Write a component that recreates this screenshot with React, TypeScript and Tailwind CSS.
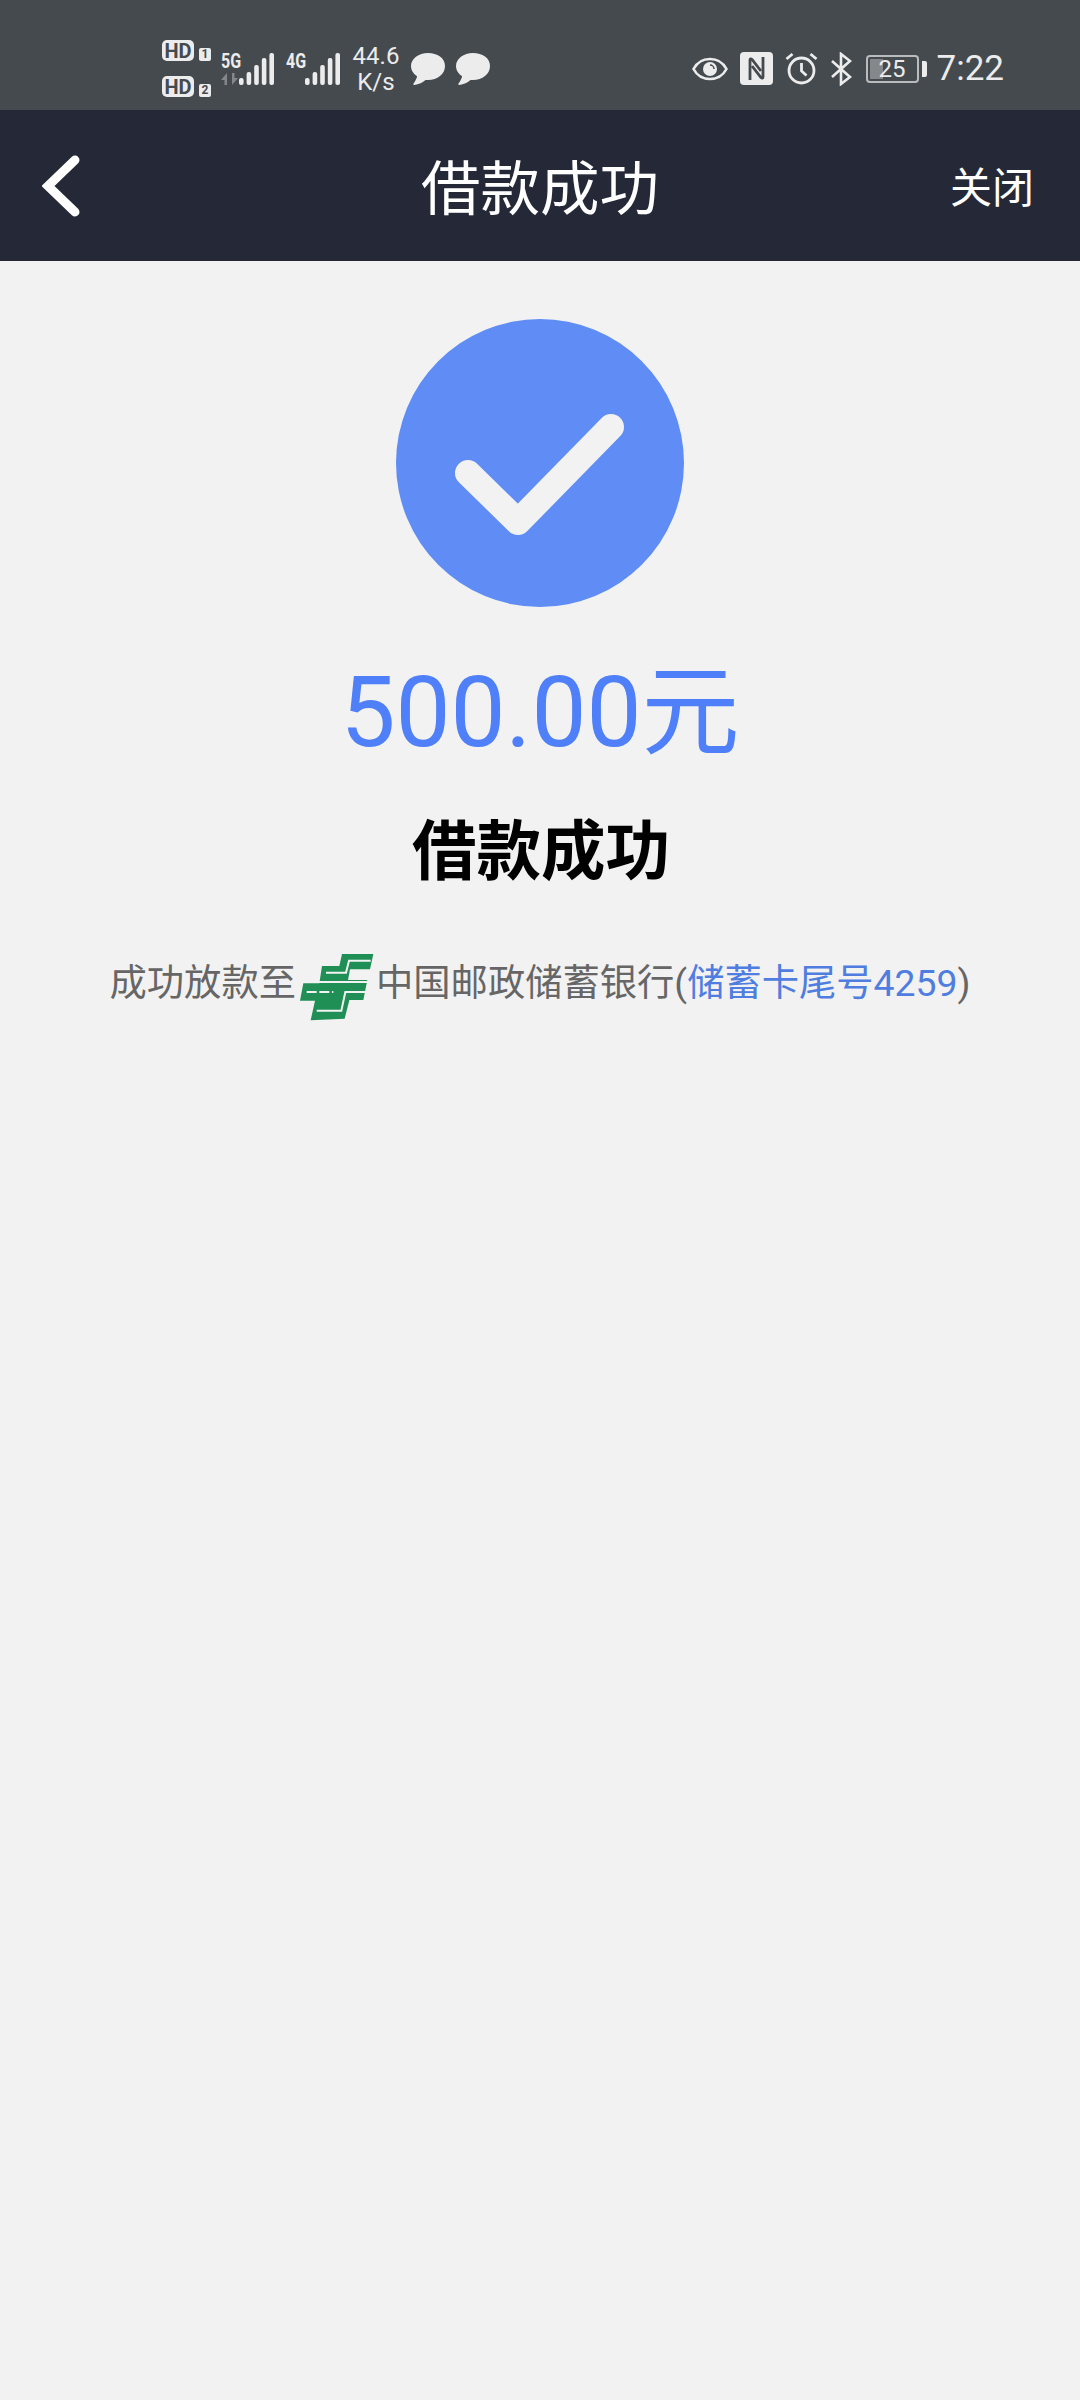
const FONT = "font-['Roboto','Noto_Sans_CJK_SC',sans-serif]";

function SimBadge({ n }: { n: string }) {
  return (
    <div className="flex items-center gap-[5px]">
      <span className="flex h-[21px] w-[32px] items-center justify-center rounded-[5px] bg-[#ececec] text-[20px] font-bold leading-none text-[#454a4f]">
        HD
      </span>
      <span className="mt-[7px] flex h-[13px] w-[12px] items-center justify-center rounded-[2px] bg-[#ececec] text-[12px] font-bold leading-none text-[#454a4f]">
        {n}
      </span>
    </div>
  );
}

function NetLabel({ text }: { text: string }) {
  return (
    <span className="block w-[19px] origin-left scale-x-[0.8] text-[20px] font-bold leading-[17px]">{text}</span>
  );
}

function SignalBars() {
  const heights = [7, 13, 20, 27, 32];
  return (
    <svg width="36" height="32" viewBox="0 0 36 32" className="shrink-0">
      {heights.map((h, i) => (
        <rect key={i} x={i * 7.6} y={32 - h} width="4.6" height={h} rx="2" fill="#ececec" />
      ))}
    </svg>
  );
}

function Bubble() {
  return (
    <svg width="34" height="32" viewBox="0 0 34 32" className="shrink-0">
      <path
        d="M17 0C7.6 0 0 5.700 0 13c0 4.100 2.400 7.800 6.100 10.200-.5 2.600-2 5.200-3.600 7.300-.5.600 0 1.500.8 1.400 4.600-.6 8.500-2.300 11.200-5 .8.100 1.600.100 2.500.100 9.400 0 17-5.800 17-14S26.400 0 17 0z"
        fill="#ececec"
      />
    </svg>
  );
}

function PostLogo() {
  return (
    <svg width="74" height="68" viewBox="60 70 222 202" className="ml-[4px] mr-[2px] mt-[9px] shrink-0">
      <path
        d="M186 72H280L270 118H210L204 150H262L250 210H208L194 266L92 271L105 212H60L70 160H118L126 108H178Z"
        fill="#1f8f55"
      />
      <g fill="none" stroke="#f2f2f2" strokeWidth="6">
        <path d="M272 92H207L198 128H138" />
        <path d="M116 156H264" />
        <path d="M80 186H160" strokeDasharray="30 8" />
        <path d="M256 186H196L184 242H110" />
      </g>
    </svg>
  );
}

export default function App() {
  return (
    <div className={`flex h-[2400px] w-[1080px] flex-col bg-[#f2f2f2] ${FONT}`}>
      {/* status bar */}
      <div className="flex h-[110px] items-center justify-between bg-[#454a4f] pl-[162px] pr-[76px] pt-[27px] text-[#ececec]">
        <div className="flex items-center">
          <div className="flex flex-col gap-[15px]">
            <SimBadge n="1" />
            <SimBadge n="2" />
          </div>
          <div className="ml-[10px] flex w-[19px] flex-col items-start">
            <NetLabel text="5G" />
            <svg width="18" height="12" viewBox="0 0 18 12" className="mt-[3px]" fill="#85888b">
              <path d="M0 7L6 0V12H3.500V7zM17 5L11 12V0H13.500V5z" />
            </svg>
          </div>
          <div className="ml-[-1px]">
            <SignalBars />
          </div>
          <div className="ml-[11px] flex w-[19px] flex-col items-start">
            <NetLabel text="4G" />
            <div className="mt-[3px] h-[12px]" />
          </div>
          <div>
            <SignalBars />
          </div>
          <div className="ml-[12px] flex w-[46px] flex-col items-center text-[24px] leading-[26px]">
            <span>44.6</span>
            <span>K/s</span>
          </div>
          <div className="ml-[12px] flex gap-[11px]">
            <Bubble />
            <Bubble />
          </div>
        </div>
        <div className="flex items-center">
          <svg width="36" height="24" viewBox="0 0 36 24">
            <path d="M1.500 12C5 5.500 11 2 18 2s13 3.500 16.500 10C31 18.500 25 22 18 22S5 18.500 1.500 12z" fill="none" stroke="#ececec" strokeWidth="2.600" />
            <circle cx="18" cy="12" r="7" fill="#ececec" />
            <path d="M18 8a4 4 0 0 1 4 4" fill="none" stroke="#454a4f" strokeWidth="1.500" />
          </svg>
          <svg width="33" height="33" viewBox="0 0 33 33" className="ml-[12px]">
            <rect width="33" height="33" rx="4" fill="#ececec" />
            <path d="M10 28V8c0-1.500 1-1.500 2-.5L21 19" fill="none" stroke="#454a4f" strokeWidth="2.800" />
            <path d="M23 5v20c0 1.500-1 1.500-2 .5L12 14" fill="none" stroke="#454a4f" strokeWidth="2.800" />
          </svg>
          <svg width="33" height="33" viewBox="0 0 33 33" className="ml-[12px]" fill="none" stroke="#ececec" strokeWidth="2.800">
            <circle cx="16.500" cy="18.500" r="12.500" />
            <path d="M16.500 11v8l5 4.500" />
            <path d="M1.500 7l6-5M31.500 7l-6-5" />
          </svg>
          <svg width="22" height="34" viewBox="0 0 22 34" className="ml-[12px]" fill="none" stroke="#ececec" strokeWidth="2.600">
            <path d="M2 9l18 16-9 7V2l9 7L2 25" />
          </svg>
          <div className="relative ml-[14px] flex h-[28px] w-[53px] items-center justify-center rounded-[4px] border-2 border-[#b9bbbd]">
            <div className="absolute bottom-[2px] left-[2px] top-[2px] w-[13px] bg-[#85888b]" />
            <span className="relative text-[24px] leading-none text-[#ececec]">25</span>
          </div>
          <div className="ml-[3px] h-[16px] w-[5px] rounded-r-[2px] bg-[#ececec]" />
          <span className="ml-[10px] text-[35px] leading-none text-[#ececec]">7:22</span>
        </div>
      </div>

      {/* nav */}
      <div className="relative flex h-[151px] items-center justify-between bg-[#252836] pl-[42px] pr-[46px] text-white">
        <svg width="38" height="62" viewBox="0 0 38 62" fill="none" stroke="#fff" strokeWidth="9" strokeLinecap="round" strokeLinejoin="miter">
          <path d="M33 5L6 31l27 26" />
        </svg>
        <span className="absolute inset-x-0 mt-[10px] text-center text-[59.5px] leading-none">借款成功</span>
        <span className="mt-[6px] text-[42px] leading-none">关闭</span>
      </div>

      {/* result */}
      <div className="flex flex-col items-center">
        <div className="mt-[58px] flex h-[288px] w-[288px] items-center justify-center rounded-full bg-[#5f8df5]">
          <svg width="288" height="288" viewBox="0 0 288 288" fill="none" stroke="#f2f2f2" strokeWidth="26" strokeLinecap="round" strokeLinejoin="round">
            <path d="M72 154L122 203L215 108" />
          </svg>
        </div>
        <div className="mt-[46px] text-[98px] leading-[120px] text-[#4f80fa]">500.00元</div>
        <div className="ml-[2px] mt-[39px] text-[64.5px] font-bold leading-[80px] text-black">借款成功</div>
        <div className="mt-[52px] flex items-center text-[37.3px] leading-[68px] text-[#666666]">
          <span>成功放款至</span>
          <PostLogo />
          <span>中国邮政储蓄银行(</span>
          <span className="text-[#4f7de0]">储蓄卡尾号4259</span>
          <span>)</span>
        </div>
      </div>
    </div>
  );
}
